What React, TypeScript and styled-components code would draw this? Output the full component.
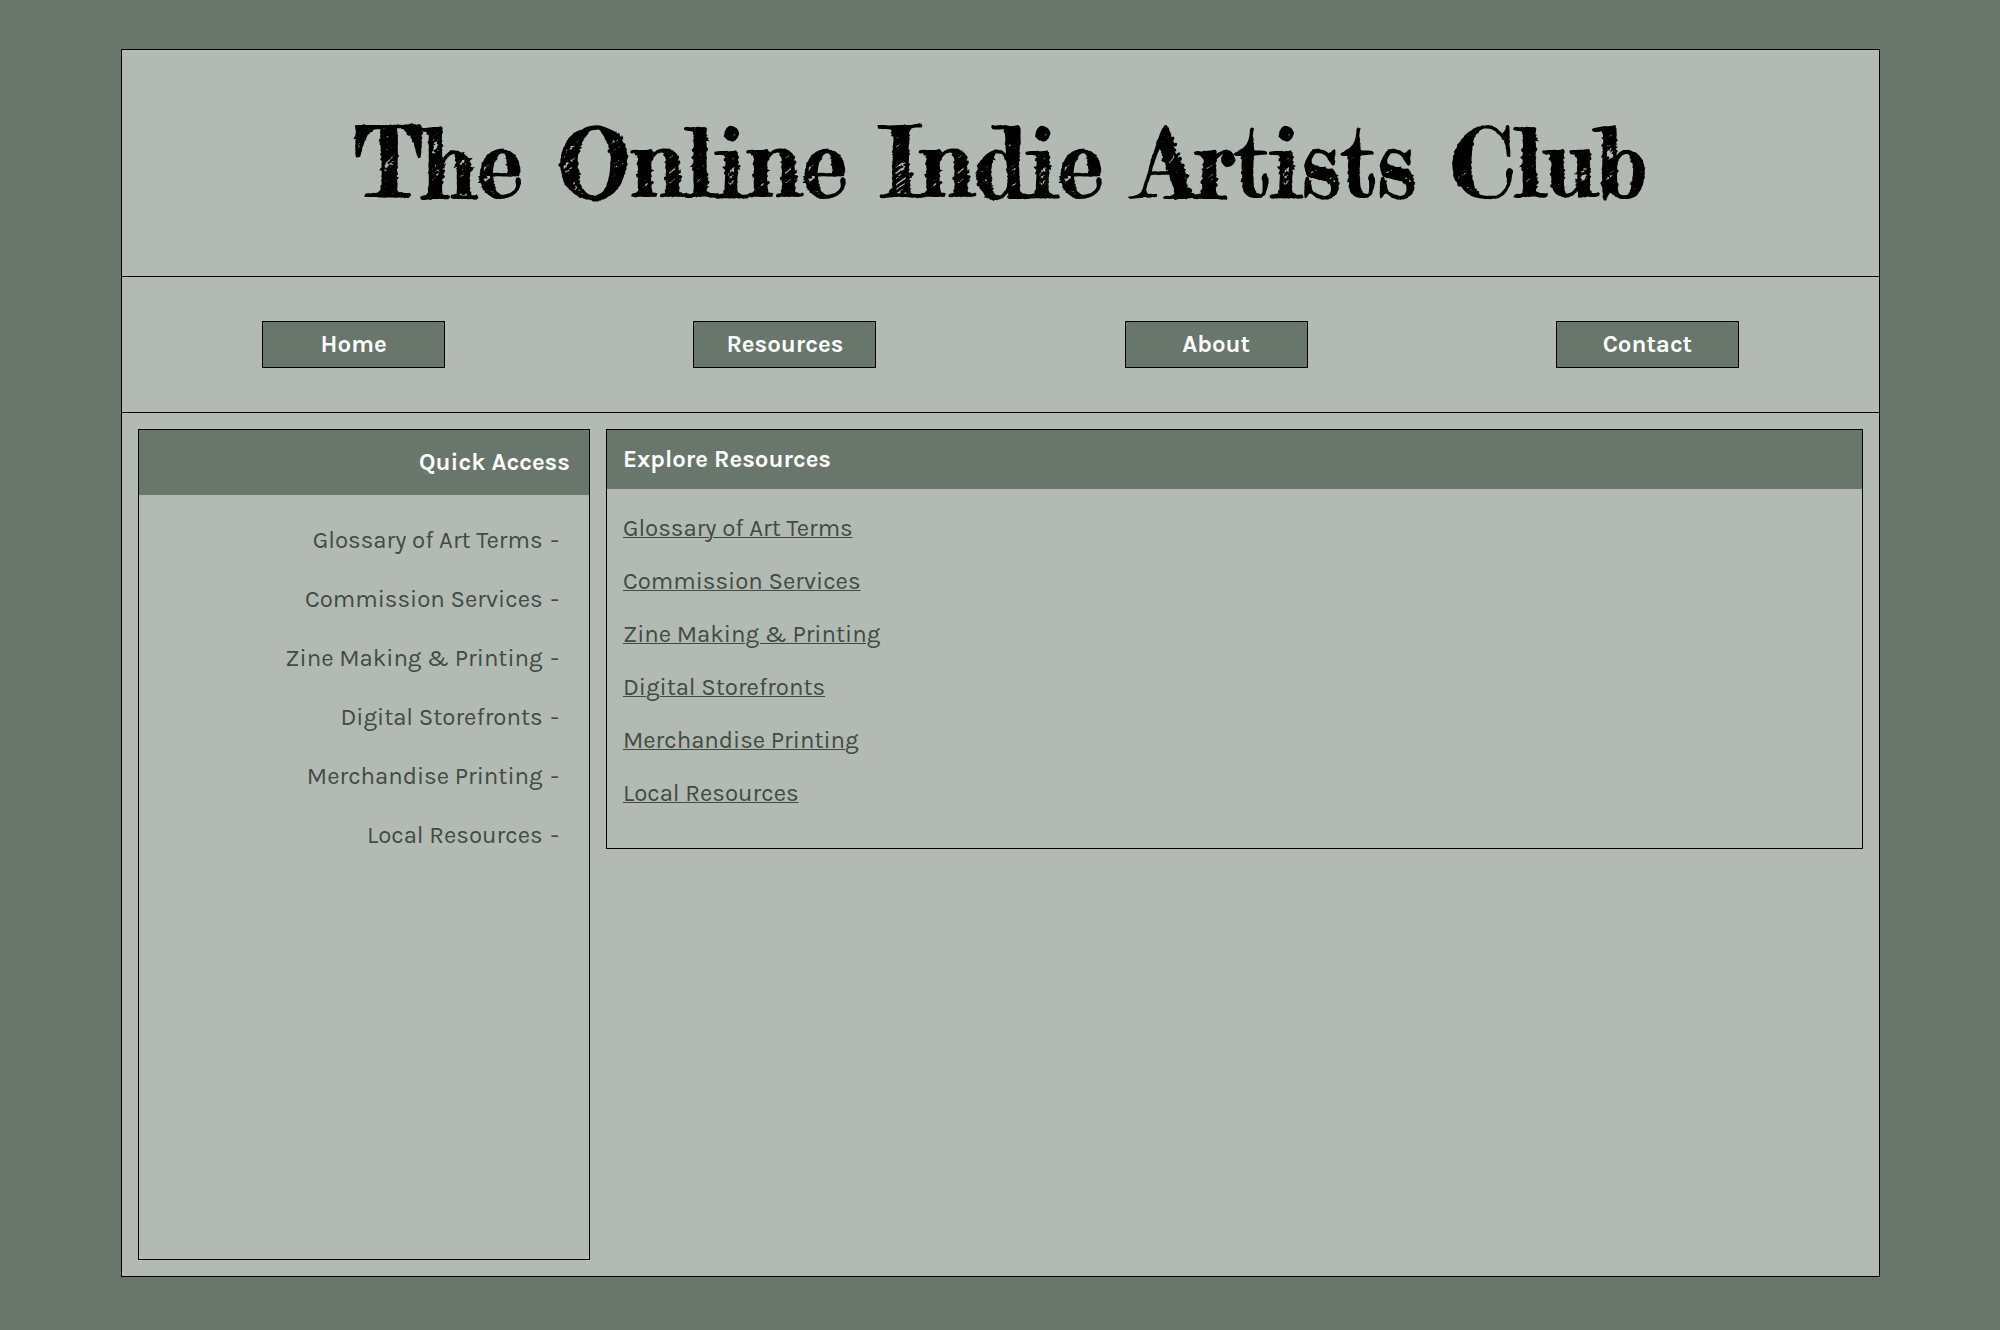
import React from "react";
import styled, { createGlobalStyle } from "styled-components";

const color = {
  moss: "#68766c",
  sage: "#b3bab3",
  ink: "#3f4c43",
  line: "#000000",
  white: "#ffffff",
};

const GlobalStyle = createGlobalStyle`
  *, *::before, *::after { box-sizing: border-box; }
  body {
    margin: 0;
    background: ${color.moss};
    color: ${color.ink};
    font-family: Karla, "Liberation Sans", Arial, sans-serif;
    font-size: 24px;
    line-height: 27px;
  }
`;

const Page = styled.div`
  display: flex;
  min-height: 100vh;
  padding: 49px 120px 53px 121px;
`;

const Sheet = styled.div`
  display: flex;
  flex: 1;
  flex-direction: column;
  min-width: 0;
  background: ${color.sage};
  border: 1px solid ${color.line};
`;

const Masthead = styled.header`
  padding: 53px 16px;
  border-bottom: 1px solid ${color.line};
`;

const Title = styled.h1`
  margin: 0;
  color: ${color.line};
  font-family: "Fredericka the Great", "Liberation Serif", "Times New Roman", serif;
  font-size: 94px;
  font-weight: 400;
  line-height: 120px;
  text-align: center;
  -webkit-text-stroke: 2px ${color.line};
`;

const NavBar = styled.nav`
  display: flex;
  flex-wrap: wrap;
  justify-content: space-around;
  gap: 16px 0;
  padding: 44px 16px;
  border-bottom: 1px solid ${color.line};
`;

const NavLink = styled.a`
  width: 183px;
  padding: 9px 8px;
  border: 1px solid ${color.line};
  background: ${color.moss};
  color: ${color.white};
  font-weight: 700;
  text-align: center;
  text-decoration: none;
`;

const Columns = styled.div`
  display: flex;
  flex: 1;
  gap: 16px;
  padding: 16px;
`;

const Sidebar = styled.aside`
  flex: none;
  width: 26.2%;
  border: 1px solid ${color.line};
`;

const Main = styled.main`
  flex: 1;
  min-width: 0;
`;

const Card = styled.section`
  border: 1px solid ${color.line};
`;

const PanelTitle = styled.h2<{ $side?: boolean }>`
  margin: 0;
  padding: ${(p) => (p.$side ? "19px" : "16px")};
  background: ${color.moss};
  color: ${color.white};
  font-size: 24px;
  font-weight: 700;
  text-align: ${(p) => (p.$side ? "right" : "left")};
`;

const LinkList = styled.ul<{ $side?: boolean }>`
  display: flex;
  flex-direction: column;
  align-items: ${(p) => (p.$side ? "flex-end" : "flex-start")};
  gap: ${(p) => (p.$side ? "32px" : "26px")};
  margin: 0;
  padding: ${(p) => (p.$side ? "32px 30px" : "26px 16px 41px")};
  list-style: none;
`;

const Item = styled.li`
  display: flex;
  gap: 8px;
`;

const TextLink = styled.a<{ $plain?: boolean }>`
  color: inherit;
  text-decoration: ${(p) => (p.$plain ? "none" : "underline")};
  text-decoration-thickness: 1px;
`;

const pages = ["Home", "Resources", "About", "Contact"];

const resources = [
  "Glossary of Art Terms",
  "Commission Services",
  "Zine Making & Printing",
  "Digital Storefronts",
  "Merchandise Printing",
  "Local Resources",
];

export default function App() {
  return (
    <>
      <GlobalStyle />
      <Page>
        <Sheet>
          <Masthead>
            <Title>The Online Indie Artists Club</Title>
          </Masthead>
          <NavBar>
            {pages.map((page) => (
              <NavLink key={page} href="#">
                {page}
              </NavLink>
            ))}
          </NavBar>
          <Columns>
            <Sidebar>
              <PanelTitle $side>Quick Access</PanelTitle>
              <LinkList $side>
                {resources.map((name) => (
                  <Item key={name}>
                    <TextLink $plain href="#">
                      {name}
                    </TextLink>
                    <span>-</span>
                  </Item>
                ))}
              </LinkList>
            </Sidebar>
            <Main>
              <Card>
                <PanelTitle>Explore Resources</PanelTitle>
                <LinkList>
                  {resources.map((name) => (
                    <Item key={name}>
                      <TextLink href="#">{name}</TextLink>
                    </Item>
                  ))}
                </LinkList>
              </Card>
            </Main>
          </Columns>
        </Sheet>
      </Page>
    </>
  );
}
